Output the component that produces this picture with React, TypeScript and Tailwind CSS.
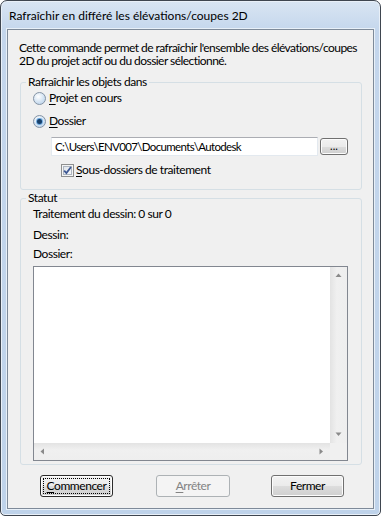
import React from "react";

const font = "font-['Lato',sans-serif] tracking-[-0.45px]";

function Radio({ checked }: { checked?: boolean }) {
  return (
    <svg width="13" height="13" viewBox="0 0 13 13" className="shrink-0">
      <defs>
        <radialGradient id={checked ? "rgc" : "rgu"} cx="0.4" cy="0.35" r="0.75">
          <stop offset="0" stopColor="#ffffff" />
          <stop offset="1" stopColor="#b6d0ea" />
        </radialGradient>
      </defs>
      <circle cx="6.5" cy="6.5" r="6" fill={`url(#${checked ? "rgc" : "rgu"})`} stroke="#8593a4" />
      {checked && (
        <>
          <circle cx="6.5" cy="6.5" r="3.4" fill="#69a6de" />
          <circle cx="6.5" cy="6.5" r="2.5" fill="#17406b" />
        </>
      )}
    </svg>
  );
}

function Checkbox() {
  return (
    <svg width="13" height="13" viewBox="0 0 13 13" className="shrink-0">
      <defs>
        <linearGradient id="cbg" x1="0" y1="0" x2="1" y2="1">
          <stop offset="0" stopColor="#dfe4ea" />
          <stop offset="1" stopColor="#f7f8fa" />
        </linearGradient>
      </defs>
      <rect x="0.5" y="0.5" width="12" height="12" fill="#f4f4f4" stroke="#8e8f8f" />
      <rect x="2.5" y="2.5" width="8" height="8" fill="url(#cbg)" stroke="#aeb6c0" />
      <path d="M3.2 6.6 L5.4 9 L10 3" fill="none" stroke="#3d5894" strokeWidth="1.8" />
    </svg>
  );
}

function Arrow({ dir }: { dir: "up" | "down" | "left" | "right" }) {
  const paths: Record<string, string> = {
    up: "M0.5 4 L3.5 0.5 L6.5 4 Z",
    down: "M0.5 0.5 L3.5 4 L6.5 0.5 Z",
    left: "M4 0.5 L0.5 3.5 L4 6.5 Z",
    right: "M0.5 0.5 L4 3.5 L0.5 6.5 Z",
  };
  const vert = dir === "up" || dir === "down";
  return (
    <svg width={vert ? 7 : 5} height={vert ? 5 : 7} viewBox={vert ? "0 0 7 5" : "0 0 5 7"}>
      <path d={paths[dir]} fill="#8a8a8a" />
    </svg>
  );
}

function Button({
  children,
  disabled,
  isDefault,
}: {
  children: React.ReactNode;
  disabled?: boolean;
  isDefault?: boolean;
}) {
  if (disabled) {
    return (
      <div className="w-[74px] h-[22px] rounded-[3px] border border-[#adb2b5] bg-[#f4f4f4] flex items-center justify-center text-[12px] text-[#838383]">
        {children}
      </div>
    );
  }
  return (
    <div
      className={`w-[73px] h-[22px] rounded-[3px] border ${
        isDefault ? "border-[#2b2b2b]" : "border-[#707070]"
      } bg-[linear-gradient(#f2f2f2_0%,#ebebeb_50%,#dddddd_50%,#cfcfcf_100%)] shadow-[inset_0_0_0_1px_#fcfcfc] flex items-center justify-center text-[12px] text-black relative`}
    >
      {isDefault && (
        <div className="absolute inset-[2px] border border-dotted border-black" />
      )}
      <span className="relative">{children}</span>
    </div>
  );
}

export default function App() {
  return (
    <div
      className={`${font} w-[381px] h-[516px] bg-white text-[12px] leading-[14px] text-black`}
    >
      <div className="w-[381px] h-[516px] rounded-t-[7px] rounded-b-[5px] border border-[#3f4650] bg-[linear-gradient(#d9e5f3_0px,#c4d6ec_30px,#bfd3ea_100%)] shadow-[inset_0_0_0_1px_#e9f0f8] flex flex-col px-[6px] pb-[6px]">
        <div className="h-[28px] flex items-center pl-[2px] pt-[1px] text-[12px] text-black whitespace-nowrap tracking-normal">
          Rafraîchir en différé les élévations/coupes 2D
        </div>
        <div className="flex-1 border border-[#7e8a99] bg-[#f0f0f0] shadow-[0_0_0_1px_#e8f0f8] flex flex-col">
          <div className="pl-[11px] pt-[11px] leading-[13px] text-[12px] whitespace-nowrap tracking-[-0.55px]">
            <div>Cette commande permet de rafraîchir l'ensemble des élévations/coupes</div>
            <div>2D du projet actif ou du dossier sélectionné.</div>
          </div>

          <fieldset className="ml-[12px] mr-[11px] mt-[8px] border border-[#d5dfe5] rounded-[3px] px-0 pb-[11px]">
            <legend className="ml-[5px] px-[2px] leading-[14px]">Rafraîchir les objets dans</legend>
            <div className="h-[16px] pl-[12px] flex items-center gap-[3px] mt-[1px]">
              <Radio />
              <span>
                <span className="underline underline-offset-2">P</span>rojet en cours
              </span>
            </div>
            <div className="h-[16px] pl-[12px] flex items-center gap-[3px] mt-[7px]">
              <Radio checked />
              <span>
                <span className="underline underline-offset-2">D</span>ossier
              </span>
            </div>
            <div className="pl-[30px] mt-[8px] flex items-center gap-[2px]">
              <div className="w-[267px] h-[19px] bg-white border border-[#e3e9ef] border-t-[#abadb3] flex items-center pl-[3px] text-[11.5px] tracking-[-0.65px] whitespace-nowrap">
                C:\Users\ENV007\Documents\Autodesk
              </div>
              <div className="w-[28px] h-[17px] rounded-[3px] border border-[#707070] bg-[linear-gradient(#f2f2f2_0%,#ebebeb_50%,#dddddd_50%,#cfcfcf_100%)] shadow-[inset_0_0_0_1px_#fcfcfc] flex items-center justify-center text-[11px] leading-none pb-[3px] tracking-normal">
                ...
              </div>
            </div>
            <div className="h-[16px] pl-[40px] mt-[6px] flex items-center gap-[2px]">
              <Checkbox />
              <span>
                <span className="underline underline-offset-2">S</span>ous-dossiers de traitement
              </span>
            </div>
          </fieldset>

          <fieldset className="ml-[12px] mr-[11px] mt-[1px] border border-[#d5dfe5] rounded-[3px] px-0 pb-[3px]">
            <legend className="ml-[5px] px-[2px] leading-[14px]">Statut</legend>
            <div className="h-[16px] pl-[12px] flex items-center mt-[1px]">
              Traitement du dessin: 0 sur 0
            </div>
            <div className="h-[16px] pl-[12px] flex items-center mt-[5px]">Dessin:</div>
            <div className="h-[16px] pl-[12px] flex items-center mt-[3px]">Dossier:</div>
            <div className="ml-[12px] mr-[13px] mt-[4px] h-[195px] border border-[#828790] bg-white flex flex-col">
              <div className="flex-1 flex">
                <div className="flex-1" />
                <div className="w-[17px] bg-[linear-gradient(90deg,#e3e3e3,#f0f0f0_40%,#eeeeee)] flex flex-col items-center justify-between py-[6px]">
                  <Arrow dir="up" />
                  <Arrow dir="down" />
                </div>
              </div>
              <div className="h-[17px] flex">
                <div className="flex-1 bg-[linear-gradient(#e3e3e3,#f0f0f0_40%,#eeeeee)] flex items-center justify-between px-[6px]">
                  <Arrow dir="left" />
                  <Arrow dir="right" />
                </div>
                <div className="w-[17px] bg-[#f0f0f0]" />
              </div>
            </div>
          </fieldset>

          <div className="mt-[10px] flex items-start pl-[32px]">
            <Button isDefault>
              <span className="underline underline-offset-2">C</span>ommencer
            </Button>
            <div className="ml-[43px]">
              <Button disabled>
                <span className="underline underline-offset-2">A</span>rrêter
              </Button>
            </div>
            <div className="ml-[41px]">
              <Button>Fermer</Button>
            </div>
          </div>
        </div>
      </div>
    </div>
  );
}
